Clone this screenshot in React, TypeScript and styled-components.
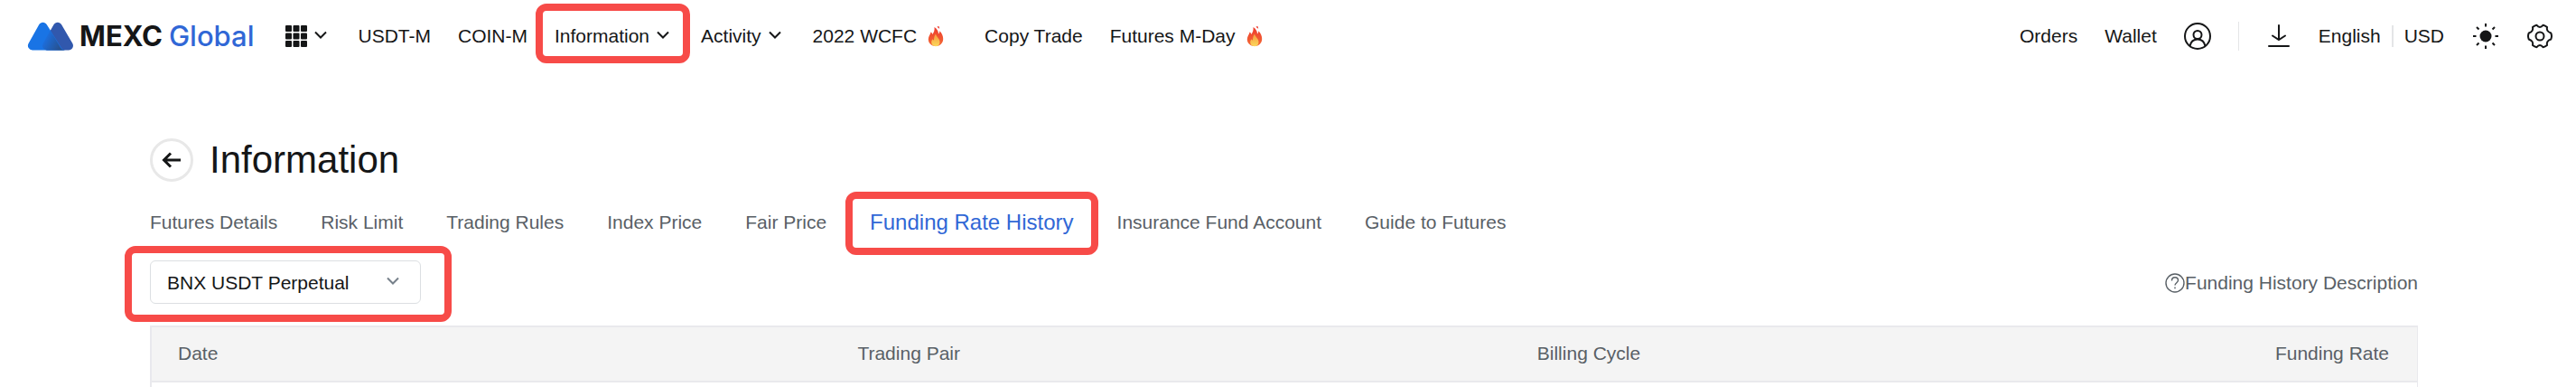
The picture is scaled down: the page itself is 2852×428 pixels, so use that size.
import React from "react";
import styled, { createGlobalStyle, css } from "styled-components";

const ink = "#151617";
const muted = "#596066";
const line = "#e9e9ed";
const accent = "#3067d6";

const GlobalStyle = createGlobalStyle`
  * { box-sizing: border-box; }
  body {
    margin: 0;
    background: #fff;
    color: ${ink};
    font: 21px/28px "Liberation Sans", Arial, sans-serif;
  }
  a { color: inherit; text-decoration: none; }
  button { padding: 0; border: 0; background: none; color: inherit; font: inherit; cursor: pointer; }
  svg { display: block; flex: none; }
`;

const Page = styled.div`
  display: flex;
  flex-direction: column;
  min-height: 100vh;
`;

const Header = styled.header`
  display: flex;
  align-items: center;
  justify-content: space-between;
  height: 80px;
  padding: 0 26px 0 30px;
  white-space: nowrap;
`;

const Bar = styled.div`
  display: flex;
  align-items: center;
`;

const Brand = styled.a`
  display: flex;
  align-items: center;
  gap: 6px;
  margin-right: 34px;
`;

const Wordmark = styled.span`
  display: flex;
  gap: 7px;
  font: 500 31px/32px Inter, sans-serif;
  color: ${accent};
  strong { font-weight: 700; color: ${ink}; }
`;

const frame = css`
  content: "";
  position: absolute;
  border: 8px solid #f74b48;
  border-radius: 12px;
  pointer-events: none;
`;

const NavItem = styled.a<{ $after?: number; $framed?: boolean }>`
  position: relative;
  display: flex;
  align-items: center;
  gap: 8px;
  margin-right: ${(p) => p.$after ?? 30}px;
  ${(p) => p.$framed && css`&::after { ${frame} inset: -22px -23px -16px -21px; }`}
`;

const HotItem = styled(NavItem)`
  gap: 12px;
`;

const Tools = styled(Bar)<{ $gap: number }>`
  gap: ${(p) => p.$gap}px;
`;

const Divider = styled.span<{ $tall?: boolean }>`
  width: ${(p) => (p.$tall ? 1 : 2)}px;
  height: ${(p) => (p.$tall ? 32 : 24)}px;
  background: #e4e5e7;
`;

const Main = styled.main`
  display: flex;
  flex: 1;
  flex-direction: column;
  padding: 73px 175px 0 166px;
`;

const TitleRow = styled.div`
  display: flex;
  align-items: center;
  gap: 18px;
`;

const Back = styled.button`
  display: grid;
  place-items: center;
  width: 48px;
  height: 48px;
  && { border: 3px solid #e8e8e8; }
  border-radius: 50%;
`;

const Title = styled.h1`
  margin: 0;
  font-size: 42px;
  font-weight: 400;
  line-height: 48px;
`;

const Tabs = styled.nav`
  display: flex;
  align-items: center;
  gap: 48px;
  margin-top: 31px;
  color: ${muted};
  white-space: nowrap;
`;

const Tab = styled.a<{ $active?: boolean }>`
  position: relative;
  ${(p) => p.$active && css`
    color: ${accent};
    font-size: 24px;
    &::after { ${frame} inset: -20px -27px -22px -27px; }
  `}
`;

const Filters = styled.div`
  display: flex;
  align-items: center;
  justify-content: space-between;
  margin: 28px 0 24px;
`;

const SelectBox = styled.div`
  position: relative;
  width: 300px;
  &::after { ${frame} inset: -16px -34px -20px -28px; }
  svg { position: absolute; right: 24px; top: 17px; pointer-events: none; }
`;

const Select = styled.select`
  display: block;
  width: 100%;
  height: 48px;
  padding: 2px 48px 0 18px;
  appearance: none;
  border: 1px solid #dcdfe2;
  border-radius: 6px;
  background: #fff;
  color: ${ink};
  font: inherit;
`;

const HelpLink = styled.a`
  display: flex;
  align-items: center;
  padding-top: 2px;
  color: ${muted};
`;

const TableFrame = styled.section`
  flex: 1;
  border: solid ${line};
  border-width: 2px 1px 0 2px;
`;

const Table = styled.table`
  width: 100%;
  border-collapse: collapse;
  table-layout: fixed;
`;

const HeadCell = styled.th<{ $last?: boolean }>`
  width: ${(p) => (p.$last ? "10%" : "30%")};
  height: 60px;
  padding: 0 31px 2px 29px;
  border-bottom: 2px solid ${line};
  background: #f4f4f4;
  color: ${muted};
  font-weight: 400;
  text-align: ${(p) => (p.$last ? "right" : "left")};
  white-space: nowrap;
`;

const Logo = () => (
  <svg width="52" height="32" viewBox="0 0 52 32" aria-hidden="true">
    <defs>
      <linearGradient id="overlap" x1="18" y1="20" x2="36" y2="30" gradientUnits="userSpaceOnUse">
        <stop stopColor="#1b70e2" />
        <stop offset="1" stopColor="#28518f" />
      </linearGradient>
    </defs>
    <path d="M29.5 3.200a5 5 0 0 1 8.600 0L50.300 24a5 5 0 0 1-4.300 7.500H22a5 5 0 0 1-4.400-7.500Z" fill="#3158ad" />
    <path d="M13.200 3.200a5 5 0 0 1 8.600 0L38 29a5 5 0 0 0 4 2.500H6A5 5 0 0 1 1.600 24Z" fill="#1974e5" />
    <path d="M25.700 9.500 36 27a7 7 0 0 0 6 4.500H22a5 5 0 0 1-4.400-7.500Z" fill="url(#overlap)" />
  </svg>
);

const GridIcon = () => (
  <svg width="24" height="24" viewBox="0 0 24 24" fill={ink} aria-hidden="true">
    {[0, 8.5, 17].map((y) =>
      [0, 8.5, 17].map((x) => <rect key={`${x}-${y}`} x={x} y={y} width="7" height="7" rx="1" />)
    )}
  </svg>
);

const Chevron = ({ color = ink }: { color?: string }) => (
  <svg width="14" height="14" viewBox="0 0 14 14" fill="none" stroke={color} strokeWidth="2" aria-hidden="true">
    <path d="m1 2.500 6 6 6-6" />
  </svg>
);

const Flame = () => (
  <svg width="18" height="24" viewBox="0 0 18 24" aria-hidden="true">
    <defs>
      <linearGradient id="flame" x1="0" y1="0" x2="0" y2="1">
        <stop stopColor="#ee3b2d" />
        <stop offset="1" stopColor="#f36a35" />
      </linearGradient>
      <linearGradient id="core" x1="0" y1="0" x2="0" y2="1">
        <stop stopColor="#f59a3e" />
        <stop offset="1" stopColor="#fbd85c" />
      </linearGradient>
    </defs>
    <path d="M7.500 2c3 2 4.500 4.500 4.500 7.500 1-.7 1.300-1.800 1.300-3.200C16 9 17.200 12 17.200 15c0 4.500-3.500 8-8.200 8S.8 19.700.8 15.500C.8 12 3 10.500 3.600 7.500c1 .6 1.500 1.500 1.700 2.500C7 8 8 5 7.500 2Z" fill="url(#flame)" />
    <path d="M9 9.500c.3 3 4.500 5 4.500 9 0 3-2 4.700-4.600 4.700S4.200 21.500 4.200 18.800c0-1.500.7-2.700 1.400-3.600.4.800.8 1.200 1.400 1.400C7 14 7.500 11.500 9 9.500Z" fill="url(#core)" />
    <path d="M10.500 1.500 12.500 1l.7 2.500-1.200-.2Z" fill="#ee3b2d" />
  </svg>
);

const UserIcon = () => (
  <svg width="30" height="30" viewBox="0 0 30 30" fill="none" stroke={ink} strokeWidth="2" aria-hidden="true">
    <circle cx="15" cy="15" r="14" />
    <circle cx="15" cy="13.500" r="4.500" />
    <path d="M6.500 26c1-5 4.500-7.500 8.500-7.500s7.500 2.500 8.500 7.500" />
  </svg>
);

const DownloadIcon = () => (
  <svg width="24" height="26" viewBox="0 0 24 26" fill="none" stroke={ink} strokeWidth="2" strokeLinecap="round" aria-hidden="true">
    <path d="M12 1v16M5 12.500l7 4.500 7-4.500M1 24h22" />
  </svg>
);

const SunIcon = () => (
  <svg width="28" height="28" viewBox="0 0 28 28" stroke={ink} strokeWidth="2" aria-hidden="true">
    <circle cx="14" cy="14" r="6.500" fill={ink} stroke="none" />
    <path d="M14 0v3.500M14 24.500V28M0 14h3.500M24.500 14H28M4 4l2.500 2.500M21.500 21.500 24 24M24 4l-2.500 2.500M6.500 21.500 4 24" />
  </svg>
);

const GearIcon = () => (
  <svg width="28" height="28" viewBox="0 0 28 28" fill="none" stroke={ink} strokeWidth="2" strokeLinejoin="round" aria-hidden="true">
    <circle cx="14" cy="14" r="4.500" />
    <path d="M10.500 1.800Q12 4 14 4T17.500 1.800Q20 2.300 22 4Q21.500 6.500 22.500 8T26.200 10.500Q27.800 14 26.200 17.500Q23.500 18.300 22.500 20T22 24Q20 25.700 17.500 26.200Q16 24 14 24T10.500 26.200Q8 25.700 6 24Q6.500 21.500 5.500 20T1.800 17.500Q.2 14 1.800 10.500Q4.500 9.700 5.500 8T6 4Q8 2.300 10.500 1.800Z" />
  </svg>
);

const BackArrow = () => (
  <svg width="22" height="18" viewBox="0 0 22 18" fill="none" stroke={ink} strokeWidth="3" aria-hidden="true">
    <path d="M21 9H3M10 1.500 2.500 9l7.500 7.500" />
  </svg>
);

const HelpIcon = () => (
  <svg width="22" height="22" viewBox="0 0 22 22" fill="none" stroke={muted} strokeWidth="1.400" aria-hidden="true">
    <circle cx="11" cy="11" r="10" />
    <path d="M7.500 8.500c0-2.200 1.500-3.700 3.500-3.700s3.500 1.400 3.500 3.300c0 2.500-3.500 2.800-3.500 5.500M11 15.500v1.800" />
  </svg>
);

const tabs = [
  "Futures Details", "Risk Limit", "Trading Rules", "Index Price", "Fair Price",
  "Funding Rate History", "Insurance Fund Account", "Guide to Futures",
];
const columns = ["Date", "Trading Pair", "Billing Cycle", "Funding Rate"];

export default function App() {
  return (
    <Page>
      <GlobalStyle />
      <Header>
        <Bar as="nav">
          <Brand href="#" aria-label="MEXC Global">
            <Logo />
            <Wordmark><strong>MEXC</strong>Global</Wordmark>
          </Brand>
          <NavItem as="button" $after={35} aria-label="All products"><GridIcon /><Chevron /></NavItem>
          <NavItem href="#">USDT-M</NavItem>
          <NavItem href="#">COIN-M</NavItem>
          <NavItem as="button" $after={35} $framed>Information<Chevron /></NavItem>
          <NavItem as="button" $after={35}>Activity<Chevron /></NavItem>
          <HotItem href="#" $after={45}>2022 WCFC <Flame /></HotItem>
          <NavItem href="#">Copy Trade</NavItem>
          <HotItem href="#">Futures M-Day <Flame /></HotItem>
        </Bar>
        <Tools $gap={32}>
          <Tools $gap={30}>
            <a href="#">Orders</a>
            <a href="#">Wallet</a>
            <button aria-label="Account"><UserIcon /></button>
            <Divider $tall />
          </Tools>
          <button aria-label="Download"><DownloadIcon /></button>
          <Tools $gap={12}>
            <button>English</button>
            <Divider />
            <button>USD</button>
          </Tools>
          <button aria-label="Theme"><SunIcon /></button>
          <button aria-label="Settings"><GearIcon /></button>
        </Tools>
      </Header>
      <Main>
        <TitleRow>
          <Back aria-label="Back"><BackArrow /></Back>
          <Title>Information</Title>
        </TitleRow>
        <Tabs>
          {tabs.map((tab) => (
            <Tab key={tab} href="#" $active={tab === "Funding Rate History"}>{tab}</Tab>
          ))}
        </Tabs>
        <Filters>
          <SelectBox>
            <Select aria-label="Contract">
              <option>BNX USDT Perpetual</option>
            </Select>
            <Chevron color="#76808a" />
          </SelectBox>
          <HelpLink href="#"><HelpIcon />Funding History Description</HelpLink>
        </Filters>
        <TableFrame>
          <Table>
            <thead>
              <tr>
                {columns.map((name) => (
                  <HeadCell key={name} scope="col" $last={name === "Funding Rate"}>{name}</HeadCell>
                ))}
              </tr>
            </thead>
          </Table>
        </TableFrame>
      </Main>
    </Page>
  );
}
